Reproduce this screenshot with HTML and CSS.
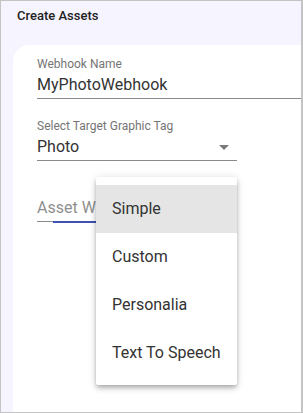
FILE: index.html
```html
<!DOCTYPE html>
<html lang="en">
<head>
    <meta charset="UTF-8">
    <meta name="viewport" content="width=device-width, initial-scale=1.0">
    <title>Create Assets</title>
    <link rel="stylesheet" href="styles.css">
</head>
<body>
    <div class="dialog">
        <h1 class="dialog-title">Create Assets</h1>
        <div class="card">
            <div class="field field-wide">
                <label class="field-label">Webhook Name</label>
                <div class="field-value">MyPhotoWebhook</div>
            </div>

            <div class="field field-select">
                <label class="field-label">Select Target Graphic Tag</label>
                <div class="field-value">
                    <span>Photo</span>
                    <span class="select-arrow"></span>
                </div>
            </div>

            <div class="field field-focused">
                <div class="field-value placeholder"><span class="placeholder-text">Asset Webhook Type</span></div>
            </div>

            <!-- open dropdown menu -->
            <ul class="menu">
                <li class="menu-item active">Simple</li>
                <li class="menu-item">Custom</li>
                <li class="menu-item">Personalia</li>
                <li class="menu-item">Text To Speech</li>
            </ul>
        </div>
    </div>
</body>
</html>
```

FILE: styles.css
```css
html, body {
    margin: 0;
    padding: 0;
}
body {
    font-family: Roboto, 'Noto Sans', Arial, sans-serif;
    color: rgba(0, 0, 0, 0.87);
}
.dialog {
    box-sizing: border-box;
    width: 303px;
    height: 413px;
    border: 1px solid #c4c4c4;
    border-right-width: 2px;
    background-color: #f6f4ff;
    overflow: hidden;
    display: flex;
    flex-direction: column;
}
.dialog-title {
    margin: 0;
    padding: 7px 0 0 16px;
    height: 37px;
    font-size: 13px;
    font-weight: 500;
    line-height: 16px;
    color: #222;
}
.card {
    position: relative;
    flex: 1;
    margin-left: 12px;
    background: white;
    border-top-left-radius: 16px;
    padding: 12px 0 0 24px;
}
.field {
    position: relative;
    width: 200px;
    margin-bottom: 20px;
    border-bottom: 1px solid #8a8a8a;
}
.field-wide {
    width: 300px;
}
.field-label {
    display: block;
    font-size: 12px;
    line-height: 14px;
    color: #757575;
    margin-bottom: 4px;
}
.field-value {
    display: flex;
    align-items: center;
    justify-content: space-between;
    font-size: 16px;
    line-height: 20px;
    padding-bottom: 3px;
    color: #333;
    white-space: nowrap;
}
.select-arrow {
    width: 0;
    height: 0;
    margin-right: 8px;
    border-left: 5px solid transparent;
    border-right: 5px solid transparent;
    border-top: 5px solid #7a7a7a;
}
.field-focused {
    margin-top: 37px;
}
.field-focused::after {
    content: '';
    position: absolute;
    left: 16px;
    right: 0;
    bottom: -2px;
    height: 2px;
    background: #3f51b5;
}
.placeholder {
    color: #8f8f8f;
}
/* the menu covers the rest of the placeholder */
.placeholder-text {
    width: 59px;
    overflow: hidden;
}
.menu {
    position: absolute;
    left: 83px;
    top: 132px;
    width: 141px;
    margin: 0;
    padding: 8px 0;
    list-style: none;
    background: white;
    border-radius: 2px;
    box-shadow: 0 2px 4px -1px rgba(0,0,0,0.2), 0 4px 5px 0 rgba(0,0,0,0.14), 0 1px 10px 0 rgba(0,0,0,0.12);
}
.menu-item {
    height: 48px;
    line-height: 48px;
    padding-left: 16px;
    font-size: 16px;
    color: #333;
}
.menu-item.active {
    background-color: #e5e5e5;
}
```
